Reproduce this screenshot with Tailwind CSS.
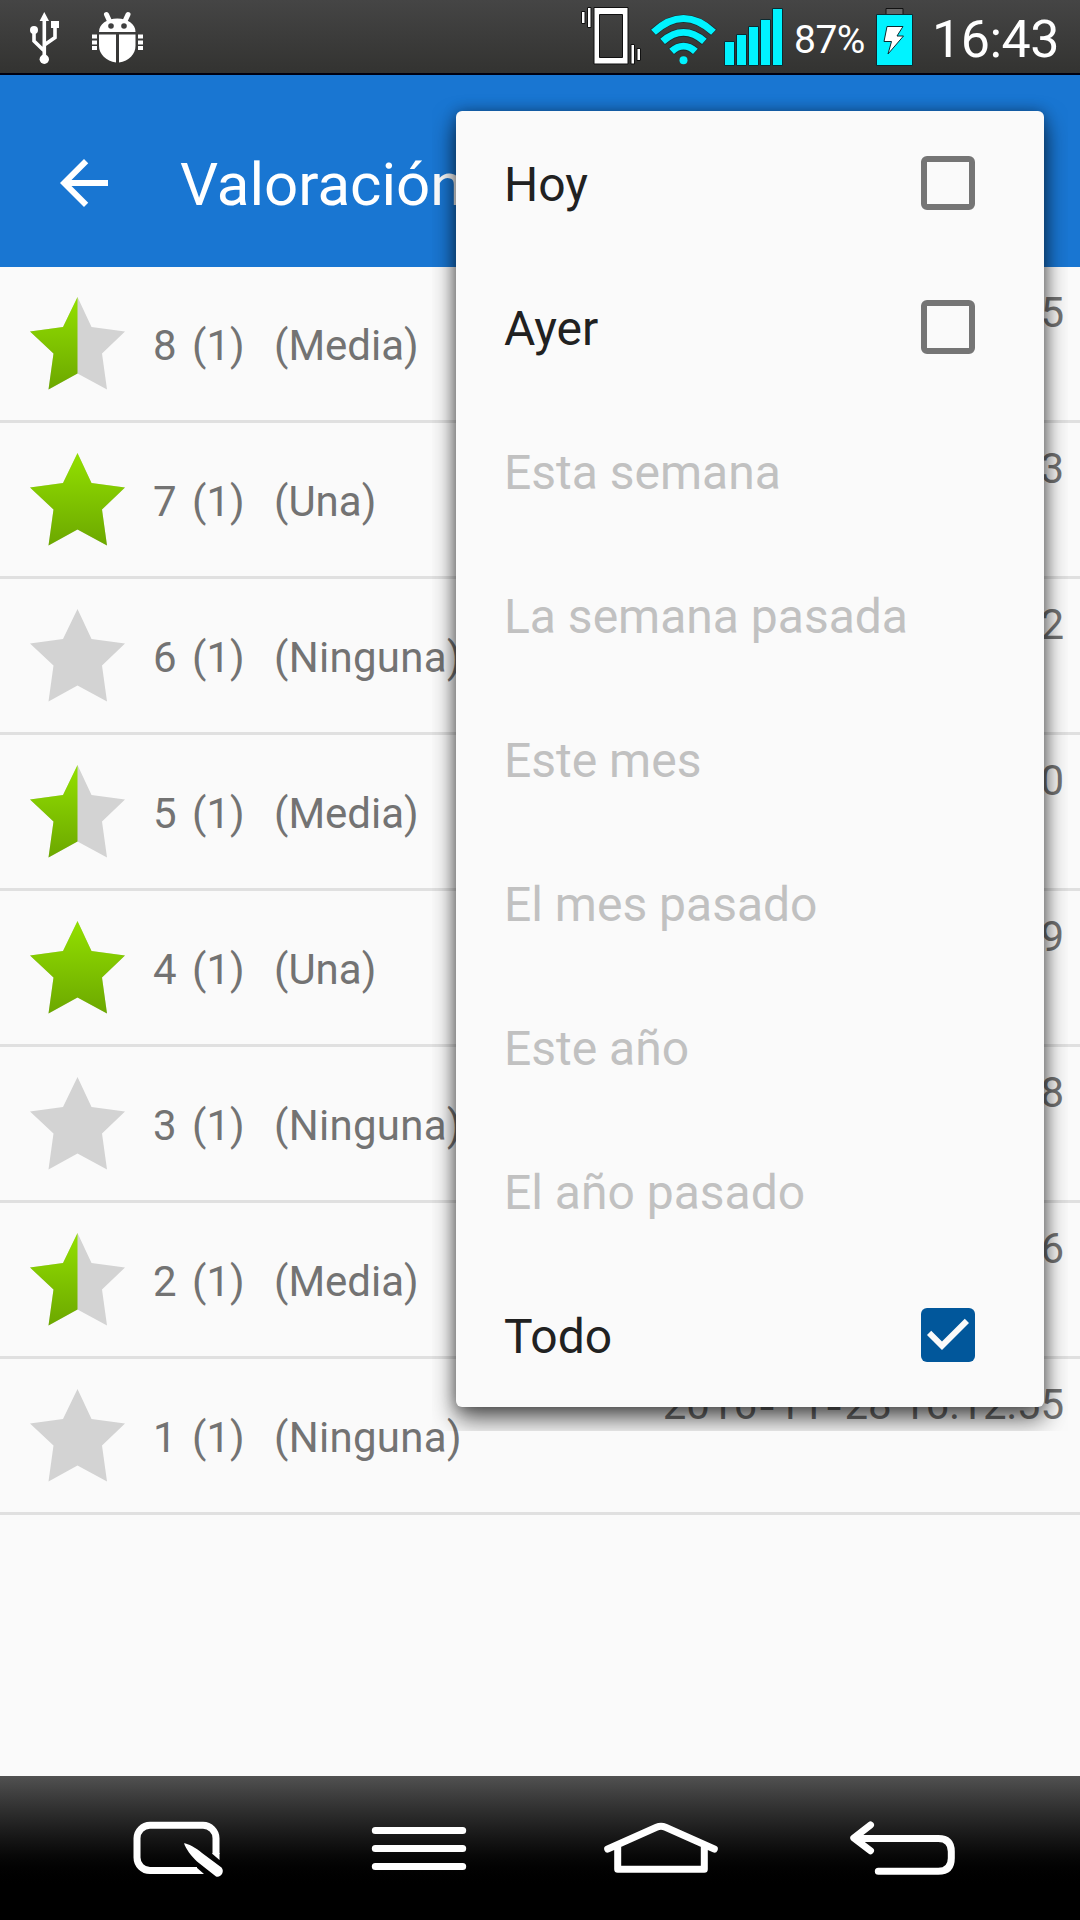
<!DOCTYPE html>
<html lang="es">
<head>
    <meta charset="utf-8">
    <title>Valoración</title>
    <script src="https://cdn.jsdelivr.net/npm/@tailwindcss/browser@4"></script>
</head>
<body class="m-0 bg-[#fafafa] overflow-hidden font-['Roboto',sans-serif]">
    <div class="relative w-[1080px] h-[1920px] flex flex-col overflow-hidden">

        <!-- Status bar -->
        <header class="h-[75px] shrink-0 flex items-start bg-linear-to-b from-[#454545] to-[#333331] border-b-2 border-[#000010] text-white">
            <svg class="ml-7 w-8 h-[72px]" viewBox="28 0 32 72" fill="none" stroke="#fff" stroke-width="3.6">
                <path d="M44.3 18V58M34 30V41L44.3 51M55 26V37.500L44.300 45"/>
                <path d="M44.300 12L49 21H39.600Z" fill="#fff" stroke="none"/>
                <circle cx="34" cy="30" r="4" fill="#fff" stroke="none"/>
                <circle cx="44.300" cy="59.300" r="4.700" fill="#fff" stroke="none"/>
                <path d="M51 21h8v7h-8z" fill="#fff" stroke="none"/>
            </svg>
            <svg class="ml-[30px] w-[54px] h-[72px]" viewBox="90 0 54 72">
                <g fill="#fff">
                    <path d="M99 32C99 24 107 18.500 117.300 18.500S135.500 24 135.500 32Z"/>
                    <path d="M99 34.500H116V62.500C106 61 99 54 99 46Z"/>
                    <path d="M119 34.500H135.500V46C135.500 54 129 61 119 62.500Z"/>
                    <path d="M92 34.500h5v4h-5zM92 40.500h5v4h-5zM92 46h5v4h-5zM138 34.500h5v4h-5zM138 40.500h5v4h-5zM138 46h5v4h-5z"/>
                </g>
                <path d="M106.500 14.500L109.500 21M128 14.500L125 21" stroke="#fff" stroke-width="5" stroke-linecap="round"/>
                <circle cx="111" cy="26" r="2.800" fill="#3f3f3f"/>
                <circle cx="124" cy="26" r="2.800" fill="#3f3f3f"/>
            </svg>

            <!-- Vibrate -->
            <svg class="ml-auto w-[62px] h-[72px]" viewBox="580 0 62 72">
                <path d="M594 7.500h34v56.500h-34zM599.500 14.500v43h23v-43z" fill="#fff" fill-rule="evenodd" stroke="#111"/>
                <path d="M581.500 11.500h3.500v12h-3.500zM587.500 7.500h3.500v20h-3.500zM631 44.500h3.500v19.500h-3.500zM637 48.500h3.500v12h-3.500z" fill="#fff" stroke="#111"/>
            </svg>
            <!-- Wi-Fi -->
            <svg class="ml-[8px] w-[68px] h-[72px]" viewBox="650 0 68 72">
                <g fill="none" stroke="#1c2a2c" stroke-width="8.500">
                    <path d="M653.100 32.600C673 14 694 14 713.900 32.600"/>
                    <path d="M662.200 41.700C676 29.500 691 29.500 704.800 41.700"/>
                    <path d="M671.200 51.700C679 44.500 688 44.500 695.800 51.700"/>
                </g>
                <g fill="none" stroke="#00f3ff" stroke-width="7">
                    <path d="M653.500 32.300C673 14 694 14 713.500 32.300"/>
                    <path d="M662.600 41.400C676 29.500 691 29.500 704.400 41.400"/>
                    <path d="M671.600 51.400C679 44.500 688 44.500 695.400 51.400"/>
                </g>
                <circle cx="683.500" cy="60.300" r="4" fill="#00f3ff"/>
            </svg>
            <!-- Signal -->
            <svg class="ml-[5px] w-[61px] h-[72px]" viewBox="723 0 61 72" fill="#00f3ff" stroke="#0c2a30">
                <path d="M724.500 41.500h10v24h-10zM736.500 34.500h10v31h-10zM748.500 26.500h10v39h-10zM760.500 19.500h10v46h-10zM772.500 8.500h10v57h-10z"/>
            </svg>
            <div class="ml-[10px] w-[74px] h-[72px] pt-[17px] text-[39px] leading-[46px] tracking-[-0.5px] whitespace-nowrap">87%</div>
            <!-- Battery -->
            <svg class="ml-[7px] w-[40px] h-[72px]" viewBox="875 0 40 72">
                <path d="M886 8.500h17v7h-17z" fill="#666" stroke="#111"/>
                <path d="M876.500 14.500h36v51h-36z" fill="#00f3ff" stroke="#0c2a30"/>
                <path d="M887 26.500H903L897 36H903.500L888 54L891.500 41.500H884Z" fill="#fff" stroke="#0c2a30"/>
            </svg>
            <div class="ml-[17px] mr-5 w-[128px] pt-[9px] text-[52px] leading-[61px] tracking-[-0.5px] whitespace-nowrap">16:43</div>
        </header>

        <!-- App bar -->
        <div class="h-48 shrink-0 flex items-center pl-12 pt-6 bg-[#1976d2] text-white">
            <svg class="w-[72px] h-[72px]" viewBox="0 0 24 24" fill="currentColor">
                <path d="M20 11H7.830l5.590-5.590L12 4l-8 8 8 8 1.410-1.410L7.830 13H20v-2z"/>
            </svg>
            <h1 class="ml-[60px] pt-1 text-[60px] leading-[70px]">Valoración</h1>
        </div>

        <!-- Entries -->
        <main id="entries" class="flex-1"></main>

        <!-- Navigation bar -->
        <nav class="h-36 shrink-0 px-[57px] grid grid-cols-4 justify-items-center bg-linear-to-b from-[#515151] to-black to-80%">
            <svg class="w-[120px] h-36" viewBox="0 0 120 144" fill="none" stroke="#fff" stroke-width="7">
                <path d="M79 94.500H32A13 13 0 0 1 19 81.500V62.300A13 13 0 0 1 32 49.300H85A13 13 0 0 1 98 62.300V78"/>
                <path d="M94.500 77V78L101.500 84V77ZM78 91V98H86L78 91Z" fill="#fff" stroke="none"/>
                <path d="M66 67.300C70 67.500 78 72 84 77L103.500 91.500C107 95.500 103 102 98 100.500L79 85.500C73 80 68 73 66 67.300Z" fill="#fff" stroke="none"/>
            </svg>
            <svg class="w-[120px] h-36" viewBox="0 0 120 144" stroke="#fff" stroke-width="7" stroke-linecap="round">
                <path d="M16.300 54.500H103.700M16.300 72.500H103.700M16.300 90.500H103.700"/>
            </svg>
            <svg class="w-[120px] h-36" viewBox="0 0 120 144" fill="none" stroke="#fff" stroke-width="7" stroke-linecap="round" stroke-linejoin="round">
                <path d="M6.700 73L55.500 51.200Q60 49.200 64.500 51.200L113.300 73M16.700 70V93.300H103.300V70"/>
            </svg>
            <svg class="w-[120px] h-36" viewBox="0 0 120 144" fill="none" stroke="#fff" stroke-width="7" stroke-linecap="round" stroke-linejoin="round">
                <path d="M28.500 49L11.800 62L28.500 74.700M14 62.500H96.300Q109.300 62.500 109.300 75.500V82.300Q109.300 95.300 96.300 95.300H36.300"/>
            </svg>
        </nav>

        <!-- Filter menu -->
        <ul id="filter-menu" class="absolute left-[456px] top-[111px] w-[588px] rounded-[6px] bg-[#fafafa] shadow-[0_12px_24px_rgba(0,0,0,0.65),0_0_14px_rgba(0,0,0,0.3)] [clip-path:inset(-20px_-24px_-24px_-24px)]"></ul>
    </div>

    <svg width="0" height="0" class="absolute">
        <defs>
            <linearGradient id="green" x1="0" y1="0" x2="0" y2="1">
                <stop offset="0" stop-color="#93e000"/>
                <stop offset="1" stop-color="#6ca800"/>
            </linearGradient>
            <clipPath id="left-half"><path d="M0 0H47.500V96H0Z"/></clipPath>
            <path id="star" d="M47.500 1L61.500 31L95 35.500L72 57.500L77 93.500L47.500 77.500L18.500 93.500L23.500 57.500L0 35.500L33 31Z"/>
        </defs>
    </svg>

    <script>
        const entries = [
            [8, 'Media', '2016-11-28 16:13:05'],
            [7, 'Una', '2016-11-28 16:13:03'],
            [6, 'Ninguna', '2016-11-28 16:13:02'],
            [5, 'Media', '2016-11-28 16:13:00'],
            [4, 'Una', '2016-11-28 16:12:59'],
            [3, 'Ninguna', '2016-11-28 16:12:58'],
            [2, 'Media', '2016-11-28 16:12:56'],
            [1, 'Ninguna', '2016-11-28 16:12:55']
        ];

        // null means the option is disabled
        const filters = [
            ['Hoy', false],
            ['Ayer', false],
            ['Esta semana', null],
            ['La semana pasada', null],
            ['Este mes', null],
            ['El mes pasado', null],
            ['Este año', null],
            ['El año pasado', null],
            ['Todo', true]
        ];

        function star(rating) {
            let fill = '';
            if (rating === 'Una') fill = '<use href="#star" fill="url(#green)"/>';
            if (rating === 'Media') fill = '<use href="#star" fill="url(#green)" clip-path="url(#left-half)"/>';
            return `<svg class="w-[95px] h-24 mt-[29px]" viewBox="0 0 95 96"><use href="#star" fill="#d3d3d3"/>${fill}</svg>`;
        }

        // wide hyphens between the date parts
        function formatDate(date) {
            return date.replaceAll('-', '<span class="inline-block w-5 text-center translate-y-[2px] scale-x-125">-</span>');
        }

        function checkbox(checked) {
            if (checked === null) return '';
            if (!checked) return '<span class="w-[54px] h-[54px] border-[6px] border-[#757575] rounded-[6px]"></span>';
            return `<span class="w-[54px] h-[54px] bg-[#01579b] rounded-[6px]">
                <svg class="w-[54px] h-[54px]" viewBox="3 3 18 18" fill="#fafafa"><path d="M10 17l-5-5 1.410-1.410L10 14.170l7.590-7.590L19 8z"/></svg>
            </span>`;
        }

        document.getElementById('entries').innerHTML = entries.map(([id, rating, date]) => `
            <div class="h-[156px] flex items-start pl-[30px] pr-4 border-b-[3px] border-[#e0e0e0] text-[42px] leading-[49px] text-[#737373] whitespace-nowrap">
                ${star(rating)}
                <span class="ml-[28px] mt-[54px] w-[121px] [word-spacing:5px]">${id} (1)</span>
                <span class="mt-[54px] ${rating === 'Ninguna' ? 'tracking-[0.3px]' : ''}">(${rating})</span>
                <span class="ml-auto mt-[21px]">${formatDate(date)}</span>
            </div>`).join('');

        document.getElementById('filter-menu').innerHTML = filters.map(([label, checked]) => `
            <li class="h-36 flex items-center justify-between pl-12 pr-[69px] text-[48px] leading-[56px] ${checked === null ? 'text-[#c1c1c1]' : 'text-[#212121]'}">
                <span class="pt-1">${label}</span>${checkbox(checked)}
            </li>`).join('');
    </script>
</body>
</html>
